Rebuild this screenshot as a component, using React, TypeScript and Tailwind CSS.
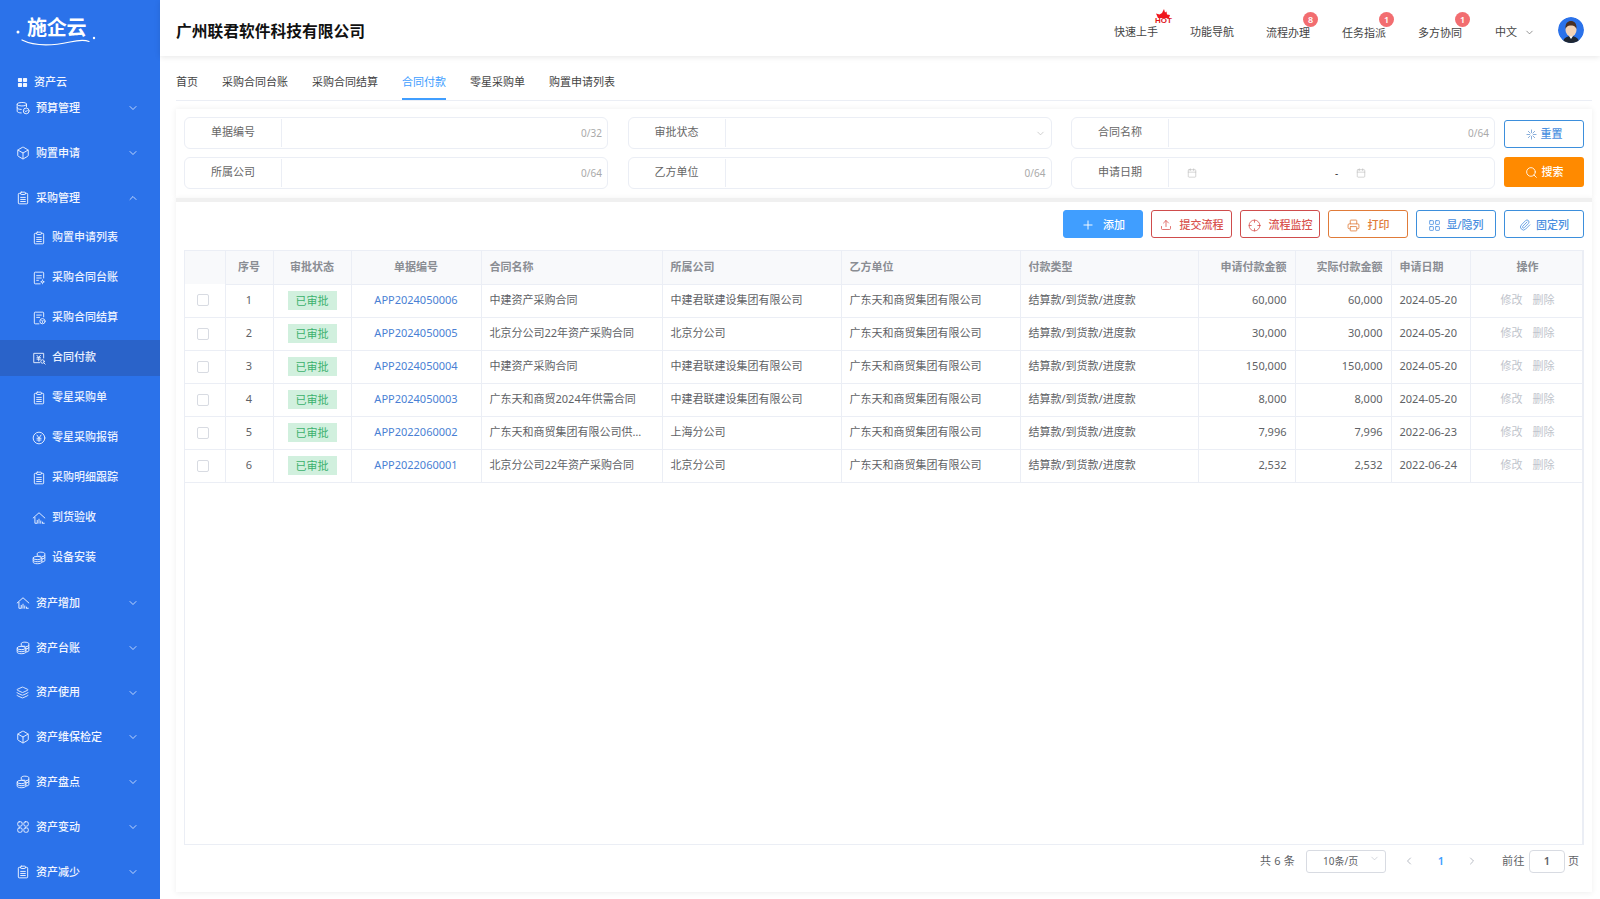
import React from "react";
import { ChevronDown, ChevronUp, ChevronLeft, ChevronRight, Plus, Upload, Printer, Paperclip, Search, LayoutGrid, Calendar, Box, Layers, Crosshair } from "lucide-react";

type IP = { className?: string };
const Svg = ({ className = "w-[14px] h-[14px]", children }: IP & { children: React.ReactNode }) => (
  <svg viewBox="0 0 24 24" fill="none" stroke="currentColor" strokeWidth={1.6} strokeLinecap="round" strokeLinejoin="round" className={className + " shrink-0"}>{children}</svg>
);
const Clip = () => (
  <Svg><path d="M8 4H5.500A1.500 1.500 0 0 0 4 5.500v15A1.500 1.500 0 0 0 5.500 22h13a1.500 1.500 0 0 0 1.500-1.500v-15A1.500 1.500 0 0 0 18.500 4H16" /><rect x="8" y="2" width="8" height="4" rx="1" /><path d="M8 11h8M8 14.500h8M8 18h8" /></Svg>
);
const Grid4 = () => (
  <svg viewBox="0 0 12 12" className="w-[11px] h-[11px] shrink-0" fill="currentColor"><rect x="1" y="1" width="4.500" height="4.500" rx="0.8" /><rect x="6.500" y="1" width="4.500" height="4.500" rx="0.8" /><rect x="1" y="6.500" width="4.500" height="4.500" rx="0.8" /><rect x="6.500" y="6.500" width="4.500" height="4.500" rx="0.8" /></svg>
);
const DbCheck = () => (
  <Svg><ellipse cx="10" cy="5.500" rx="8" ry="3" /><path d="M2 5.500v12c0 1.700 3 3 7 3M18 5.500V10M2 11.500c0 1.700 3 3 7 3" /><circle cx="17.500" cy="17" r="5" /><path d="M15.500 17l1.500 1.500 2.500-2.800" /></Svg>
);
const Stack = () => (
  <Svg><path d="M9 7V4.500C9 3 11.500 2 15 2s7 1 7 2.500v12c0 1.300-2 2.200-5 2.400M9 8.500c1 .3 3 .5 6 .5M17 13.500c3-.2 5-1.200 5-2.500M22 7.500c0 1-2 2-5 2.200" /><ellipse cx="9" cy="12" rx="7" ry="2.800" /><path d="M2 12v7c0 1.600 3 2.800 7 2.800s8-1.200 8-2.800v-7M2 15.500c0 1.600 3 2.800 7 2.800s8-1.200 8-2.800" /></Svg>
);
const Doc1 = () => (
  <Svg><path d="M20 12V3.500A1.500 1.500 0 0 0 18.500 2h-13A1.500 1.500 0 0 0 4 3.500v17A1.500 1.500 0 0 0 5.500 22H14" /><path d="M8 8h8M8 12h8M8 16h3" /><circle cx="18" cy="18.500" r="1.800" /><path d="M18 15v1M18 21v1M15 18.500h1M20 18.500h1" strokeWidth={1.2} /></Svg>
);
const Doc2 = () => (
  <Svg><path d="M20 10V3.500A1.500 1.500 0 0 0 18.500 2h-13A1.500 1.500 0 0 0 4 3.500v17A1.500 1.500 0 0 0 5.500 22H12" /><path d="M8 7h8M8 11h5" /><circle cx="18" cy="17.500" r="4.500" /><path d="M16.500 16l1.500 1.500 1.500-1.500M18 17.500v2.500" strokeWidth={1.3} /></Svg>
);
const PayDoc = () => (
  <Svg><path d="M20 12V4H3v16h10" /><path d="M8.500 7.500L11.500 11l3-3.500M11.500 11v6M8.500 11.500h6M8.500 14h6" /><circle cx="18" cy="18" r="3" /><path d="M20.500 20.500L22.500 22.500" /></Svg>
);
const Yuan = () => (
  <Svg><circle cx="12" cy="12" r="10" /><path d="M8.500 7l3.500 5 3.500-5M12 12v6M8.500 12.500h7M8.500 15.500h7" /></Svg>
);
const House = () => (
  <Svg><path d="M2 12L12 3l10 9M5 11v10h3M9 21v-5M12 21v-7M15 21v-4M18 21v-2M21 21h-2" /></Svg>
);
const Four = () => (
  <Svg><rect x="3" y="3" width="7.500" height="7.500" rx="2.500" /><rect x="13.500" y="3" width="7.500" height="7.500" rx="2.500" /><rect x="3" y="13.500" width="7.500" height="7.500" rx="2.500" /><rect x="13.500" y="13.500" width="7.500" height="7.500" rx="2.500" /></Svg>
);

const Parent = ({ icon, label, open, cls = "h-[44.800px]" }: { icon: React.ReactNode; label: string; open?: boolean; cls?: string }) => (
  <div className={"flex items-center pl-4 pr-[21px] text-[#f2f6ff] " + cls}>
    <span className="w-5 flex">{icon}</span>
    <span className="flex-1 text-[11px] font-medium">{label}</span>
    {open ? <ChevronUp className="w-[12px] h-[12px]" strokeWidth={1.5} /> : <ChevronDown className="w-[12px] h-[12px]" strokeWidth={1.5} />}
  </div>
);
const Sub = ({ icon, label, active }: { icon: React.ReactNode; label: string; active?: boolean }) => (
  <div className={"flex items-center h-[36px] mb-1 pl-[32px] text-[#eaf1ff] " + (active ? "bg-[#2a63c9]" : "")}>
    <span className="w-5 flex">{icon}</span>
    <span className="text-[11px] font-medium">{label}</span>
  </div>
);

const Sidebar = () => (
  <aside className="w-[160px] shrink-0 h-full bg-[#2b72ea] overflow-hidden">
    <div className="h-[69px] relative">
      <span className="absolute left-[27px] top-[13px] text-white text-[20px] font-semibold leading-[30px] tracking-[-0.3px]">施企云</span>
      <svg viewBox="0 0 110 56" className="absolute left-0 top-0 w-[110px] h-[56px]" fill="none" stroke="#fff">
        <circle cx="18" cy="32" r="1.500" fill="#fff" stroke="none" />
        <circle cx="94" cy="38" r="1.200" fill="#fff" stroke="none" />
        <path d="M22 40C36 47 56 45 70 42c7-1.500 14-2.500 19-.5" strokeWidth="1.200" strokeLinecap="round" />
      </svg>
    </div>
    <div className="flex items-center h-[26px] pl-[17px] text-[#f2f6ff]">
      <span className="w-[17px] flex"><Grid4 /></span>
      <span className="text-[11px] font-medium">资产云</span>
    </div>
    <Parent cls="h-[26px] mb-[10px]" icon={<DbCheck />} label="预算管理" />
    <Parent icon={<Box className="w-[14px] h-[14px]" strokeWidth={1.6} />} label="购置申请" />
    <Parent open icon={<Clip />} label="采购管理" />
    <div className="-mt-[1px] mb-[5px]">
      <Sub icon={<Clip />} label="购置申请列表" />
      <Sub icon={<Doc1 />} label="采购合同台账" />
      <Sub icon={<Doc2 />} label="采购合同结算" />
      <Sub active icon={<PayDoc />} label="合同付款" />
      <Sub icon={<Clip />} label="零星采购单" />
      <Sub icon={<Yuan />} label="零星采购报销" />
      <Sub icon={<Clip />} label="采购明细跟踪" />
      <Sub icon={<House />} label="到货验收" />
      <Sub icon={<Stack />} label="设备安装" />
    </div>
    <Parent icon={<House />} label="资产增加" />
    <Parent icon={<Stack />} label="资产台账" />
    <Parent icon={<Layers className="w-[13px] h-[13px]" strokeWidth={1.6} />} label="资产使用" />
    <Parent icon={<Box className="w-[14px] h-[14px]" strokeWidth={1.6} />} label="资产维保检定" />
    <Parent icon={<Stack />} label="资产盘点" />
    <Parent icon={<Four />} label="资产变动" />
    <Parent icon={<Clip />} label="资产减少" />
  </aside>
);

const Badge = ({ n }: { n: string }) => (
  <span className="absolute -right-[8px] -top-[13px] w-[15px] h-[15px] rounded-full bg-[#f26d70] text-white text-[9px] font-semibold flex items-center justify-center">{n}</span>
);

const TopItem = ({ label, badge, hot }: { label: string; badge?: string; hot?: boolean }) => (
  <div className={"relative text-[11px] text-[#444] " + (badge ? "mt-[2px]" : "")}>
    {label}
    {badge && <Badge n={badge} />}
    {hot && (
      <span className="absolute -right-[16px] -top-[15px] w-[19px] h-[15px]">
        <svg viewBox="0 0 19 9" className="absolute left-0 top-0 w-[19px] h-[9px]"><path d="M1 4.500l3.500 1L7 4 9 0l1 3.500 1.500-1 .5 3 3 .5-1 3H3z" fill="#f0171d" /></svg>
        <span className="absolute left-0 bottom-0 text-[8px] leading-[7px] font-bold text-[#e0151b] font-['Liberation_Sans',sans-serif]">HOT</span>
      </span>
    )}
  </div>
);

const Header = () => (
  <header className="h-[56px] pt-2 shrink-0 bg-white shadow-[0_1px_6px_rgba(0,0,0,0.1)] flex items-center pl-4 pr-4 relative z-10">
    <div className="flex-1 text-[15.750px] font-bold text-[#111]">广州联君软件科技有限公司</div>
    <div className="flex items-center gap-8">
      <TopItem label="快速上手" hot />
      <TopItem label="功能导航" />
      <TopItem label="流程办理" badge="8" />
      <TopItem label="任务指派" badge="1" />
      <TopItem label="多方协同" badge="1" />
      <div className="ml-[1px] flex items-center gap-[7px] text-[11px] text-[#444]">中文<ChevronDown className="w-[11px] h-[11px] text-[#666]" strokeWidth={1.5} /></div>
    </div>
    <svg viewBox="0 0 26 26" className="w-[26px] h-[26px] ml-[23px] -mt-[5px] rounded-full">
      <circle cx="13" cy="13" r="13" fill="#2b72ea" />
      <path d="M5 26c0-5 4-7 8-7s8 2 8 7z" fill="#1f2733" />
      <path d="M11 19h4l-2 3z" fill="#fff" />
      <ellipse cx="13" cy="13" rx="5.500" ry="6.500" fill="#f3d3b8" />
      <path d="M7.500 12c-.5-6 2.500-8 5.500-8s6 2 5.500 8c-1-2-2-3.500-5.500-3.500S8.500 10 7.500 12z" fill="#4a2f22" />
    </svg>
  </header>
);

const tabs = ["首页", "采购合同台账", "采购合同结算", "合同付款", "零星采购单", "购置申请列表"];
const Tabs = () => (
  <div className="h-[45px] pt-[11px] shrink-0 flex gap-6 border-b border-[#ebeef5]">
    {tabs.map((t) => (
      <div key={t} className={"h-full flex items-center text-[11px] border-b-2 " + (t === "合同付款" ? "border-[#409eff] text-[#409eff]" : "border-transparent text-[#444]")}>{t}</div>
    ))}
  </div>
);

const Field = ({ label, children }: { label: string; children?: React.ReactNode }) => (
  <div className="h-[32px] flex border border-[#ebeef5] rounded-[6px] bg-white">
    <div className="w-[97px] my-[1px] pb-[1px] shrink-0 border-r border-[#ebeef5] flex items-center justify-center text-[11px] text-[#666]">{label}</div>
    <div className="flex-1 flex items-center px-[5px] text-[10px] text-[#aaa]">{children}</div>
  </div>
);
const Count = ({ t }: { t: string }) => <span className="ml-auto">{t}</span>;

const SearchCard = () => (
  <div className="h-[89px] mt-[8px] shrink-0 bg-white shadow-[0_0_6px_rgba(0,0,0,0.07)] px-2 pt-2 flex gap-[9px]">
    <div className="flex-1 grid grid-cols-3 gap-x-[19.500px] gap-y-2 content-start">
      <Field label="单据编号"><Count t="0/32" /></Field>
      <Field label="审批状态"><ChevronDown className="ml-auto w-[11px] h-[11px] text-[#bbb]" strokeWidth={1.5} /></Field>
      <Field label="合同名称"><Count t="0/64" /></Field>
      <Field label="所属公司"><Count t="0/64" /></Field>
      <Field label="乙方单位"><Count t="0/64" /></Field>
      <Field label="申请日期">
        <Calendar className="ml-[13px] w-[10px] h-[10px] text-[#bbb]" strokeWidth={1.5} />
        <span className="ml-[138px] text-[#333]">-</span>
        <Calendar className="ml-[18px] w-[10px] h-[10px] text-[#bbb]" strokeWidth={1.5} />
      </Field>
    </div>
    <div className="w-[80px] shrink-0 flex flex-col">
      <button className="mt-[3px] h-[28px] pt-[1px] border border-[#3d8fdc] rounded-[3px] text-[#4a8fe0] text-[11px] font-medium flex items-center justify-center gap-[4px]">
        <svg viewBox="0 0 12 12" className="w-[11px] h-[11px]" stroke="#7fa7d8" strokeWidth="1" strokeLinecap="round"><path d="M6 1v3M6 8v3M1 6h3M8 6h3M2.500 2.500l2 2M7.500 7.500l2 2M9.500 2.500l-2 2M4.500 7.500l-2 2" /></svg>重置
      </button>
      <button className="mt-[9px] h-[30px] bg-[#ff8a00] rounded-[3px] text-white text-[11px] font-medium flex items-center justify-center gap-[4px]">
        <Search className="w-[13px] h-[13px]" strokeWidth={1.6} />搜索
      </button>
    </div>
  </div>
);

const ToolBtn = ({ icon, label, cls }: { icon: React.ReactNode; label: string; cls: string }) => (
  <button className={"h-[28px] pt-[2px] rounded-[3px] border text-[11px] font-medium flex items-center justify-center " + cls}>{icon}{label}</button>
);

const rows = [
  ["1", "APP2024050006", "中建资产采购合同", "中建君联建设集团有限公司", "60,000", "2024-05-20"],
  ["2", "APP2024050005", "北京分公司22年资产采购合同", "北京分公司", "30,000", "2024-05-20"],
  ["3", "APP2024050004", "中建资产采购合同", "中建君联建设集团有限公司", "150,000", "2024-05-20"],
  ["4", "APP2024050003", "广东天和商贸2024年供需合同", "中建君联建设集团有限公司", "8,000", "2024-05-20"],
  ["5", "APP2022060002", "广东天和商贸集团有限公司供…", "上海分公司", "7,996", "2022-06-23"],
  ["6", "APP2022060001", "北京分公司22年资产采购合同", "北京分公司", "2,532", "2022-06-24"],
];
const widths = [40, 48, 78, 130, 181, 179, 179, 178, 97, 96, 79, 115];
const heads: [string, string][] = [["", "center"], ["序号", "center"], ["审批状态", "center"], ["单据编号", "center"], ["合同名称", "left"], ["所属公司", "left"], ["乙方单位", "left"], ["付款类型", "left"], ["申请付款金额", "right"], ["实际付款金额", "right"], ["申请日期", "left"], ["操作", "center"]];
const alignCls: Record<string, string> = { center: "text-center", left: "text-left", right: "text-right" };
const td = "border-r border-b border-[#ebeef5] px-2 h-[33px] whitespace-nowrap";

const DataTable = () => (
  <div className="flex-1 border border-[#ebeef5] border-r-2 overflow-hidden">
    <table className="w-[1400px] table-fixed border-collapse text-[11px] text-[#606266]">
      <colgroup>{widths.map((w, i) => <col key={i} style={{ width: w }} />)}</colgroup>
      <thead>
        <tr className="h-[33px] bg-[#f8f9fb]">
          {heads.map(([h, a], i) => (
            <th key={i} className={"border-r border-b border-[#ebeef5] px-2 font-semibold text-[#8a8d93] " + alignCls[a] + (i === 0 ? " border-b-0" : "")}>{h}</th>
          ))}
        </tr>
      </thead>
      <tbody>
        {rows.map((r) => (
          <tr key={r[0]}>
            <td className={td}><span className="block w-[12px] h-[12px] ml-[4px] border border-[#d8dbe2] rounded-[2px]" /></td>
            <td className={td + " text-center"}>{r[0]}</td>
            <td className={td + " text-center"}><span className="inline-block w-[49px] h-[19px] leading-[19px] bg-[#d1f0de] text-[#3bb06d] align-middle">已审批</span></td>
            <td className={td + " text-center text-[#4a7fd4]"}>{r[1]}</td>
            <td className={td}>{r[2]}</td>
            <td className={td}>{r[3]}</td>
            <td className={td}>广东天和商贸集团有限公司</td>
            <td className={td}>结算款/到货款/进度款</td>
            <td className={td + " text-right"}>{r[4]}</td>
            <td className={td + " text-right"}>{r[4]}</td>
            <td className={td}>{r[5]}</td>
            <td className={td + " text-center text-[#c0c4cc]"}><span className="mr-[10px]">修改</span>删除</td>
          </tr>
        ))}
      </tbody>
    </table>
  </div>
);

const Pager = () => (
  <div className="h-[47px] shrink-0 flex items-center justify-end pr-[5px] pb-[15px] text-[11px] text-[#606266]">
    <span className="tracking-[0.2px]">共 6 条</span>
    <div className="ml-[11px] w-[80px] h-[23px] border border-[#d8dbe2] rounded-[3px] relative flex items-center pl-4 text-[10px]">
      10条/页
      <ChevronDown className="absolute right-[5px] top-[2px] w-[11px] h-[11px] text-[#c0c4cc]" strokeWidth={1.5} />
    </div>
    <ChevronLeft className="ml-[17px] w-[12px] h-[12px] text-[#b8bcc4]" strokeWidth={2} />
    <span className="ml-[22px] w-[8px] text-center text-[#409eff] font-semibold">1</span>
    <ChevronRight className="ml-[21px] w-[12px] h-[12px] text-[#b8bcc4]" strokeWidth={2} />
    <span className="ml-[24px] tracking-[0.5px]">前往</span>
    <div className="ml-[4px] w-[36px] h-[23px] border border-[#d8dbe2] rounded-[4px] flex items-center justify-center font-semibold">1</div>
    <span className="ml-[3px]">页</span>
  </div>
);

export default function App() {
  return (
    <div className="w-full h-[899px] flex overflow-hidden bg-white font-['Noto_Sans','Noto_Sans_CJK_SC',sans-serif]">
      <Sidebar />
      <div className="flex-1 min-w-0 flex flex-col">
        <Header />
        <main className="flex-1 min-h-0 flex flex-col pl-4 pr-2">
          <Tabs />
          <SearchCard />
          <section className="h-[694px] shrink-0 border-t-4 border-[#f0f0f0] bg-white shadow-[0_1px_6px_rgba(0,0,0,0.07)] px-2 flex flex-col">
            <div className="pt-2 h-[48px] shrink-0 flex justify-end gap-2 items-start">
              <ToolBtn cls="w-[80px] gap-[8px] bg-[#409eff] border-[#409eff] text-white" icon={<Plus className="w-[14px] h-[14px]" strokeWidth={1.6} />} label="添加" />
              <ToolBtn cls="w-[81px] gap-[8px] border-[#cf4c4c] text-[#d9534f]" icon={<Upload className="w-[12px] h-[12px]" strokeWidth={1.6} />} label="提交流程" />
              <ToolBtn cls="w-[80px] gap-[8px] border-[#cf4c4c] text-[#d9534f]" icon={<Crosshair className="w-[13px] h-[13px]" strokeWidth={1.5} />} label="流程监控" />
              <ToolBtn cls="w-[80px] gap-[8px] border-[#e07b39] text-[#e07b39]" icon={<Printer className="w-[13px] h-[13px]" strokeWidth={1.5} />} label="打印" />
              <ToolBtn cls="w-[80px] gap-[5px] border-[#3d8fdc] text-[#4a8fe0]" icon={<LayoutGrid className="w-[13px] h-[13px]" strokeWidth={1.5} />} label="显/隐列" />
              <ToolBtn cls="w-[80px] gap-[5px] border-[#3d8fdc] text-[#4a8fe0]" icon={<Paperclip className="w-[12px] h-[12px]" strokeWidth={1.6} />} label="固定列" />
            </div>
            <DataTable />
            <Pager />
          </section>
        </main>
      </div>
    </div>
  );
}
